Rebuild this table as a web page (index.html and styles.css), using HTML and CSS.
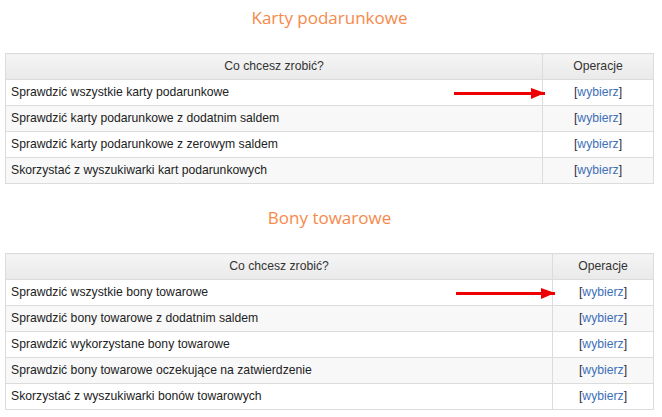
FILE: index.html
```html
<!DOCTYPE html>
<html lang="pl">
<head>
<meta charset="utf-8">
<link rel="stylesheet" href="styles.css">
</head>
<body>
<div class="page">
  <section class="block block-cards">
    <h2 class="title">Karty podarunkowe</h2>
    <table class="ops">
      <thead>
        <tr><th class="col-what">Co chcesz zrobić?</th><th class="col-op">Operacje</th></tr>
      </thead>
      <tbody>
        <tr><td>Sprawdzić wszystkie karty podarunkowe</td><td class="op"><span class="arrow"></span>[<a href="#">wybierz</a>]</td></tr>
        <tr><td>Sprawdzić karty podarunkowe z dodatnim saldem</td><td class="op">[<a href="#">wybierz</a>]</td></tr>
        <tr><td>Sprawdzić karty podarunkowe z zerowym saldem</td><td class="op">[<a href="#">wybierz</a>]</td></tr>
        <tr><td>Skorzystać z wyszukiwarki kart podarunkowych</td><td class="op">[<a href="#">wybierz</a>]</td></tr>
      </tbody>
    </table>
  </section>
  <section class="block block-vouchers">
    <h2 class="title">Bony towarowe</h2>
    <table class="ops">
      <thead>
        <tr><th class="col-what">Co chcesz zrobić?</th><th class="col-op">Operacje</th></tr>
      </thead>
      <tbody>
        <tr><td>Sprawdzić wszystkie bony towarowe</td><td class="op"><span class="arrow"></span>[<a href="#">wybierz</a>]</td></tr>
        <tr><td>Sprawdzić bony towarowe z dodatnim saldem</td><td class="op">[<a href="#">wybierz</a>]</td></tr>
        <tr><td>Sprawdzić wykorzystane bony towarowe</td><td class="op">[<a href="#">wybierz</a>]</td></tr>
        <tr><td>Sprawdzić bony towarowe oczekujące na zatwierdzenie</td><td class="op">[<a href="#">wybierz</a>]</td></tr>
        <tr><td>Skorzystać z wyszukiwarki bonów towarowych</td><td class="op">[<a href="#">wybierz</a>]</td></tr>
      </tbody>
    </table>
  </section>
</div>
</body>
</html>
```
FILE: styles.css
```css
html, body {
  margin: 0;
  padding: 0;
  background: #fff;
}
.page {
  padding: 0 8px 0 5px;
  font-family: "Liberation Sans", Arial, sans-serif;
  font-size: 12.2px;
  color: #222;
}
.block {
  display: flex;
  flex-direction: column;
}
.title {
  margin: 0;
  font-family: "Open Sans", sans-serif;
  font-weight: 400;
  font-size: 17px;
  line-height: 24px;
  color: #f7894b;
  text-align: center;
  padding-top: 6px;
  height: 53px;
  box-sizing: border-box;
}
.block-vouchers .title {
  padding-top: 6px;
  margin-top: 16px;
  height: 53px;
}
.ops {
  width: 100%;
  border-collapse: collapse;
  border: 1px solid #dcdcdc;
}
.ops th, .ops td {
  border: 1px solid #dcdcdc;
  padding: 5px 5px 5px 5px;
  line-height: 15px;
  height: 15px;
}
.ops th {
  font-weight: 400;
  color: #333;
  background: linear-gradient(#f5f5f5, #e9e9e9);
  text-align: center;
}
.block-cards .col-op { width: 100px; }
.block-vouchers .col-op { width: 90px; }
.ops tbody tr:nth-child(even) td { background: #f8f8f8; }
.ops td.op {
  text-align: center;
  position: relative;
  color: #2a2a3a;
}
.ops a {
  color: #3e6fb8;
  text-decoration: none;
}
.arrow {
  position: absolute;
  right: calc(100% - 2px);
  top: 50%;
  width: 91px;
  height: 3px;
  margin-top: -1px;
  background: #ee0000;
}
.arrow::after {
  content: "";
  position: absolute;
  right: 0;
  top: -4px;
  border-left: 14px solid #ee0000;
  border-top: 5px solid transparent;
  border-bottom: 6px solid transparent;
}
.block-vouchers .arrow {
  width: 99px;
}
```
